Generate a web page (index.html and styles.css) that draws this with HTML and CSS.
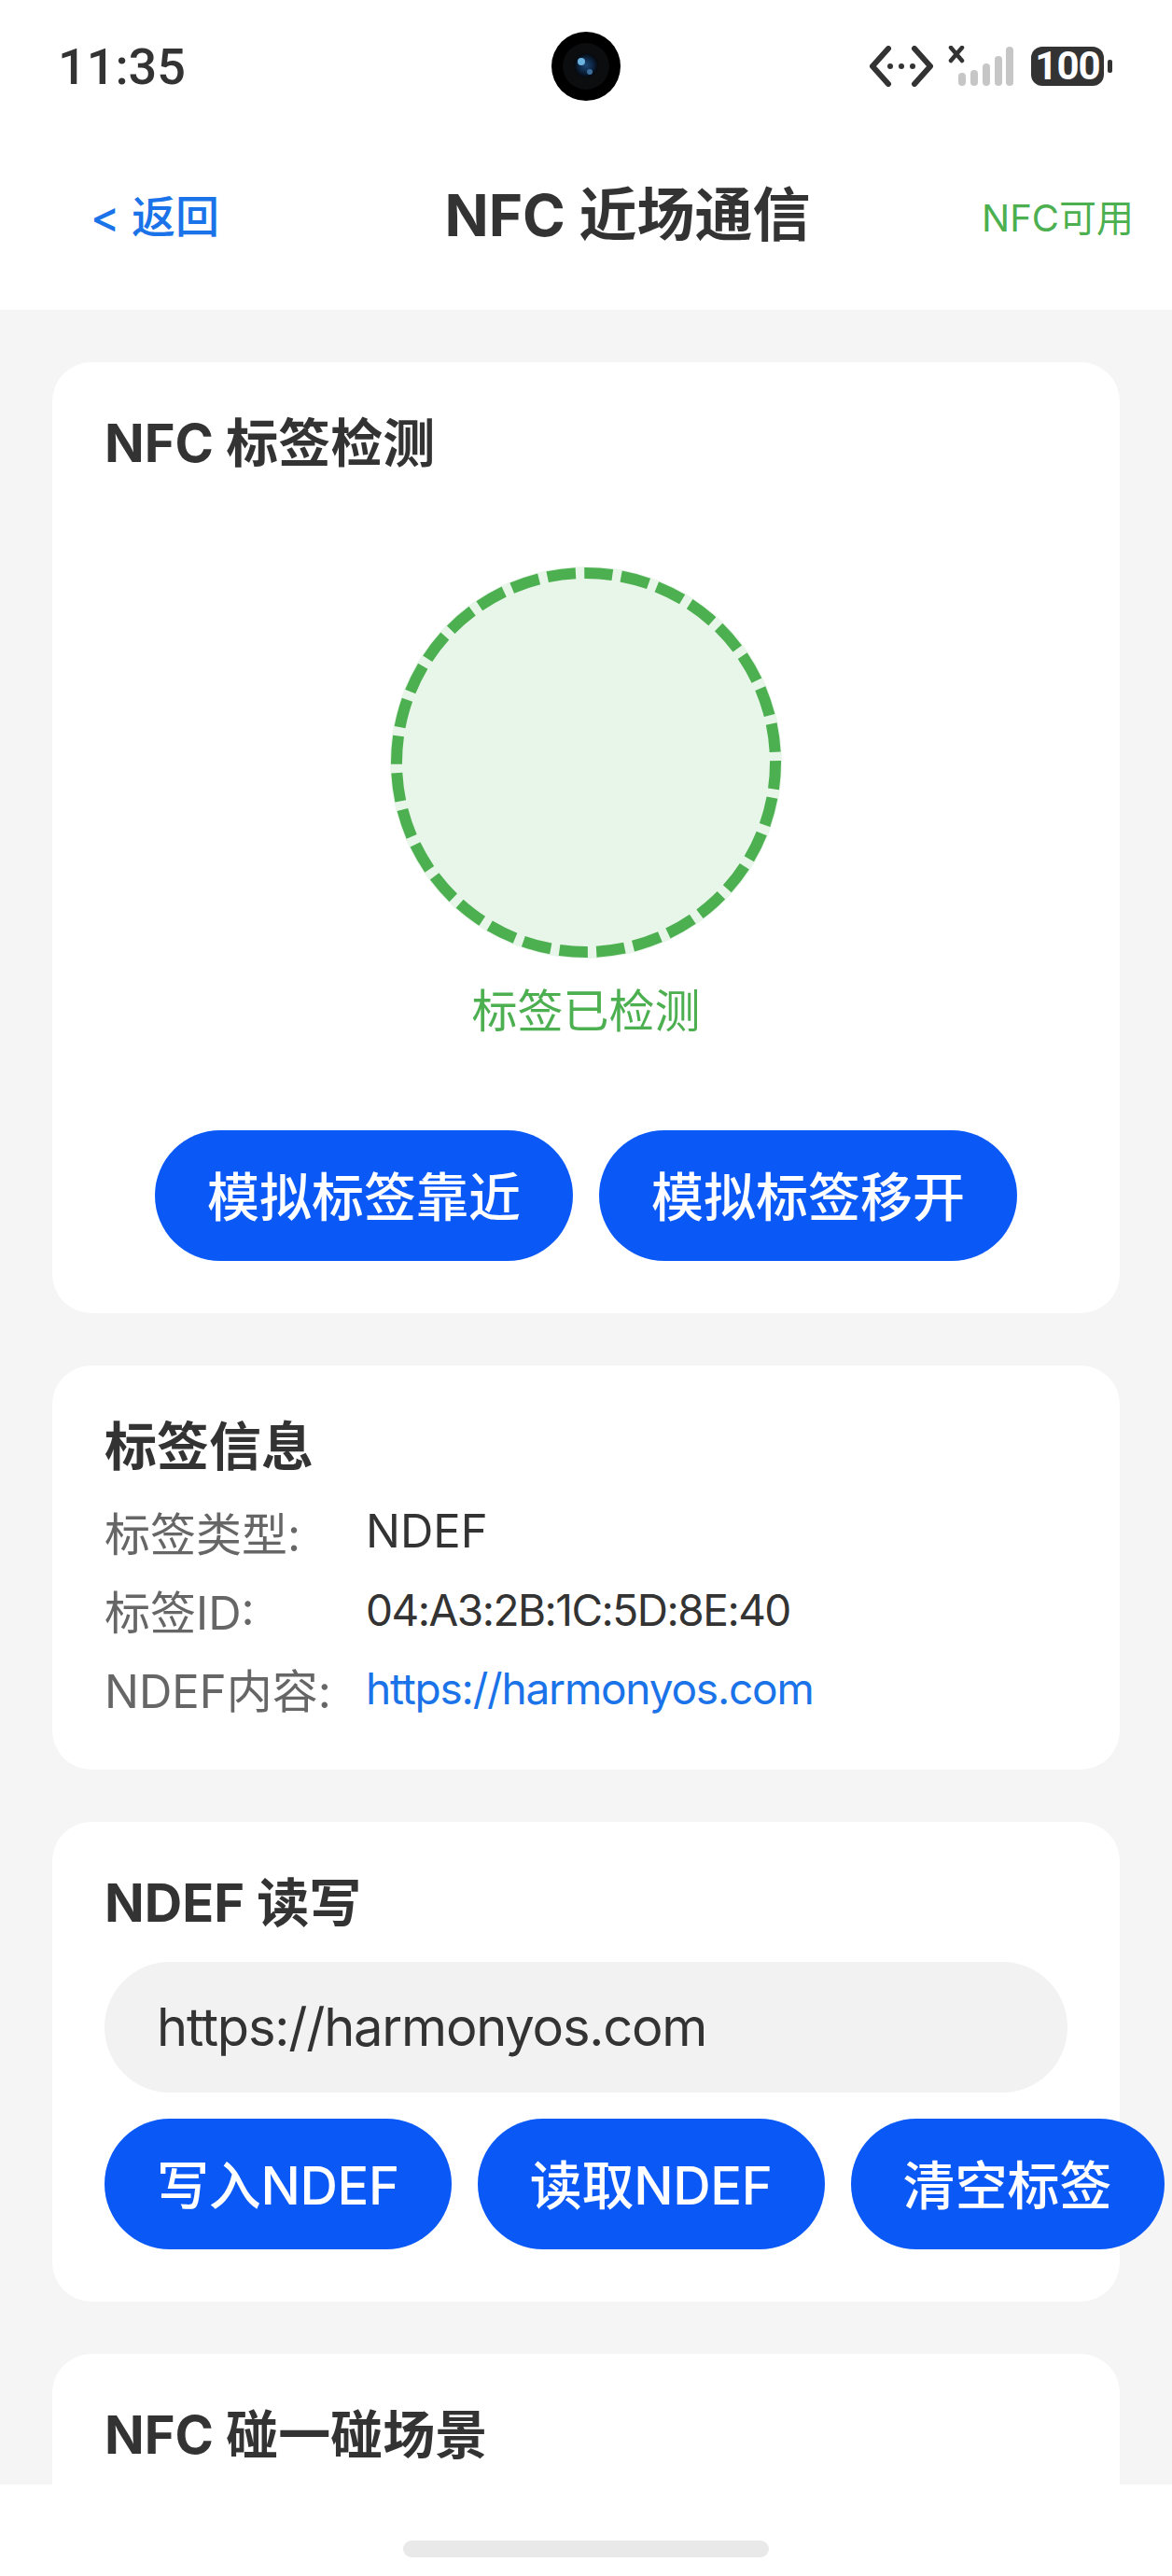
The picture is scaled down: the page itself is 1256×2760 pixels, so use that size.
FILE: index.html

```html
<!DOCTYPE html>
<html lang="zh-CN">
<head>
    <meta charset="UTF-8">
    <meta name="viewport" content="width=device-width, initial-scale=1.0">
    <title>NFC 近场通信</title>
    <link rel="stylesheet" href="styles.css">
</head>
<body>
    <div class="page">
        <header class="top">
            <div class="status-bar">
                <span class="clock">11:35</span>
                <svg class="camera" width="74" height="74" viewBox="0 0 74 74">
                    <defs>
                        <radialGradient id="lens" cx="0.5" cy="0.5" r="0.5">
                            <stop offset="0" stop-color="#1b4674"/>
                            <stop offset="0.6" stop-color="#0c2340"/>
                            <stop offset="1" stop-color="#05070b"/>
                        </radialGradient>
                    </defs>
                    <circle cx="37" cy="37" r="37" fill="#000"/>
                    <circle cx="37" cy="37" r="25" fill="#0c0d0f"/>
                    <circle cx="37" cy="36" r="13" fill="url(#lens)"/>
                    <circle cx="32" cy="32" r="4" fill="#6db3e0"/>
                    <circle cx="41" cy="43" r="3" fill="#3e6f9c"/>
                </svg>
                <div class="status-icons">
                    <svg class="net" width="68" height="44" viewBox="0 0 68 44">
                        <path d="M20 3 L3 22 L20 41 M48 3 L65 22 L48 41" fill="none" stroke="#333" stroke-width="6" stroke-linecap="round" stroke-linejoin="round"/>
                        <circle cx="22" cy="22" r="3" fill="#333"/>
                        <circle cx="34" cy="22" r="3" fill="#333"/>
                        <circle cx="46" cy="22" r="3" fill="#333"/>
                    </svg>
                    <svg class="signal" width="70" height="44" viewBox="0 0 70 44">
                        <path d="M3 2 L15 16 M15 2 L3 16" fill="none" stroke="#333" stroke-width="4.5" stroke-linecap="round"/>
                        <rect x="11" y="29" width="8" height="14" rx="4" fill="#c6c6c6"/>
                        <rect x="24" y="26" width="8" height="17" rx="4" fill="#c6c6c6"/>
                        <rect x="37" y="19" width="8" height="24" rx="4" fill="#c6c6c6"/>
                        <rect x="50" y="11" width="8" height="32" rx="4" fill="#c6c6c6"/>
                        <rect x="62" y="1" width="8" height="42" rx="4" fill="#c6c6c6"/>
                    </svg>
                    <div class="battery">
                        <span class="battery-level">100</span>
                        <span class="battery-nub"></span>
                    </div>
                </div>
            </div>
            <nav class="nav">
                <a class="back">&lt; 返回</a>
                <h1 class="nav-title">NFC 近场通信</h1>
                <span class="nfc-state">NFC可用</span>
            </nav>
        </header>

        <main class="content">
            <section class="card">
                <h2 class="card-title">NFC 标签检测</h2>
                <div class="detect">
                    <svg class="detect-ring" width="420" height="420" viewBox="0 0 420 420">
                        <circle cx="210" cy="210" r="210" fill="#e8f5e9"/>
                        <circle class="ring-dash" cx="210" cy="210" r="203"/>
                    </svg>
                    <span class="detect-text">标签已检测</span>
                </div>
                <div class="btn-row btn-row-center">
                    <button class="btn">模拟标签靠近</button>
                    <button class="btn">模拟标签移开</button>
                </div>
            </section>

            <section class="card">
                <h2 class="card-title">标签信息</h2>
                <div class="info-row info-row-first">
                    <span class="info-label">标签类型:</span>
                    <span class="info-value info-caps">NDEF</span>
                </div>
                <div class="info-row">
                    <span class="info-label">标签ID:</span>
                    <span class="info-value info-id">04:A3:2B:1C:5D:8E:40</span>
                </div>
                <div class="info-row">
                    <span class="info-label">NDEF内容:</span>
                    <span class="info-value info-link">https://harmonyos.com</span>
                </div>
            </section>

            <section class="card">
                <h2 class="card-title">NDEF 读写</h2>
                <input class="ndef-input" type="text" value="https://harmonyos.com">
                <div class="btn-row">
                    <button class="btn btn-ndef">写入NDEF</button>
                    <button class="btn btn-ndef">读取NDEF</button>
                    <button class="btn">清空标签</button>
                </div>
            </section>

            <section class="card card-tall">
                <h2 class="card-title">NFC 碰一碰场景</h2>
            </section>
        </main>

        <footer class="home-area">
            <div class="home-bar"></div>
        </footer>
    </div>
</body>
</html>
```

FILE: styles.css

```css
* {
    box-sizing: border-box;
}
html, body {
    margin: 0;
    padding: 0;
}
body {
    font-family: Inter, "Noto Sans CJK SC", sans-serif;
    color: #333;
    background: #fff;
}
.page {
    display: flex;
    flex-direction: column;
    height: 2760px;
    overflow: hidden;
}

/* status bar + title */
.top {
    background: #fff;
    flex-shrink: 0;
}
.status-bar {
    display: flex;
    align-items: center;
    justify-content: space-between;
    height: 142px;
    padding: 0 64px 0 62px;
    position: relative;
}
.clock {
    font-family: Roboto, sans-serif;
    font-size: 54px;
    font-weight: 500;
    color: #333;
}
.camera {
    position: absolute;
    left: 591px;
    top: 34px;
}
.status-icons {
    display: flex;
    align-items: center;
}
.signal {
    margin: 0 19px 0 16px;
}
.battery {
    display: flex;
    align-items: center;
    gap: 4px;
}
.battery-level {
    width: 78px;
    height: 42px;
    border-radius: 12px;
    background: #333;
    color: #fff;
    font-family: Roboto, sans-serif;
    font-size: 42px;
    font-weight: 700;
    line-height: 42px;
    text-align: center;
    letter-spacing: -1px;
}
.battery-nub {
    width: 5px;
    height: 14px;
    border-radius: 2px;
    background: #333;
}
.nav {
    display: flex;
    align-items: center;
    justify-content: space-between;
    height: 190px;
    padding: 0 41px 18px 56px;
}
.back {
    width: 237px;
    padding-left: 41px;
    font-size: 47px;
    font-weight: 500;
    color: #1a73e8;
}
.nav-title {
    margin: 0;
    padding-bottom: 4px;
    font-size: 62px;
    font-weight: 700;
    color: #333;
}
.nfc-state {
    margin-top: 6px;
    font-size: 40px;
    color: #4caf50;
}

/* cards */
.content {
    flex: 1;
    min-height: 0;
    overflow: hidden;
    display: flex;
    flex-direction: column;
    gap: 56px;
    padding: 56px 56px 0;
    background: #f5f5f5;
}
.card {
    flex-shrink: 0;
    padding: 56px;
    border-radius: 42px;
    background: #fff;
}
.card-tall {
    min-height: 400px;
}
.card-title {
    margin: 0;
    font-size: 56px;
    font-weight: 700;
    line-height: 62px;
    color: #333;
}
.detect {
    display: flex;
    flex-direction: column;
    align-items: center;
    margin-top: 101px;
}
.detect-ring {
    display: block;
}
.ring-dash {
    fill: none;
    stroke: #4caf50;
    stroke-width: 12;
    stroke-dasharray: 30.5 9.35;
    stroke-dashoffset: 2;
    transform: rotate(-90deg);
    transform-origin: 210px 210px;
}
.detect-text {
    margin-top: 24px;
    font-size: 49px;
    line-height: 66px;
    color: #4caf50;
}
.btn-row {
    display: flex;
    gap: 28px;
    margin-top: 28px;
}
.btn-row-center {
    justify-content: center;
    margin-top: 94px;
}
.btn {
    flex-shrink: 0;
    height: 140px;
    padding: 0 56px 6px;
    border: none;
    border-radius: 70px;
    background: #0a59f7;
    color: #fff;
    font-family: inherit;
    font-size: 56px;
    font-weight: 500;
}
.btn-ndef {
    letter-spacing: -0.3px;
}

/* tag info */
.info-row {
    display: flex;
    align-items: center;
    height: 63px;
    margin-top: 21px;
    font-size: 49px;
}
.info-row-first {
    margin-top: 28px;
}
.info-label {
    width: 280px;
    flex-shrink: 0;
    color: #666;
}
.info-value {
    color: #333;
    font-size: 46px;
    letter-spacing: -1.2px;
}
.info-caps {
    font-size: 49px;
    letter-spacing: 0;
}
.info-id {
    letter-spacing: -1.5px;
}
.info-link {
    color: #1a73e8;
}

/* ndef */
.ndef-input {
    display: block;
    width: 100%;
    height: 140px;
    margin-top: 32px;
    padding: 0 56px;
    border: none;
    border-radius: 70px;
    background: #f2f2f2;
    color: #333;
    font-family: inherit;
    font-size: 56px;
    letter-spacing: -1.2px;
    outline: none;
}

.home-area {
    flex-shrink: 0;
    height: 98px;
    padding-top: 60px;
    background: #fff;
}
.home-bar {
    width: 392px;
    height: 18px;
    margin: 0 auto;
    border-radius: 9px;
    background: #e9e9e9;
}
```
